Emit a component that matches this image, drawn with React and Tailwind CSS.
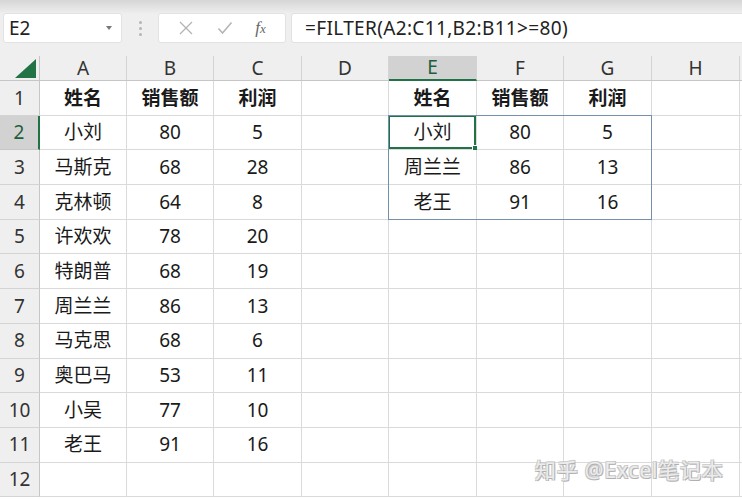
import React from 'react';

const COLS = ['A', 'B', 'C', 'D', 'E', 'F', 'G', 'H'];
const WIDTHS = [87, 87, 88, 87, 88, 87, 88, 88];

const LEFT = [
  ['姓名', '销售额', '利润'],
  ['小刘', 80, 5],
  ['马斯克', 68, 28],
  ['克林顿', 64, 8],
  ['许欢欢', 78, 20],
  ['特朗普', 68, 19],
  ['周兰兰', 86, 13],
  ['马克思', 68, 6],
  ['奥巴马', 53, 11],
  ['小吴', 77, 10],
  ['老王', 91, 16],
];

const RIGHT = [
  ['姓名', '销售额', '利润'],
  ['小刘', 80, 5],
  ['周兰兰', 86, 13],
  ['老王', 91, 16],
];

const font = { fontFamily: '"Noto Sans", "Noto Sans CJK SC", sans-serif' };

function cellValue(row, col) {
  if (col <= 2 && LEFT[row - 1]) return LEFT[row - 1][col];
  if (col >= 4 && col <= 6 && RIGHT[row - 1]) return RIGHT[row - 1][col - 4];
  return '';
}

function FormulaBar() {
  return (
    <div className="h-[56px] bg-gradient-to-b from-[#d6d6d6] via-[#efefef] via-[25%] to-[#efefef] flex items-start pt-[13px] pl-[3px]">
      <div className="w-[119px] h-[30px] bg-white rounded-[3px] border border-[#e2e2e2] flex items-center pl-[5px] pr-[9px]">
        <span className="text-[19px] text-[#222] flex-1">E2</span>
        <span className="w-0 h-0 border-l-[3px] border-r-[3px] border-t-[4px] border-l-transparent border-r-transparent border-t-[#777]" />
      </div>
      <div className="w-[36px] h-[30px] flex flex-col items-center justify-center gap-[3px]">
        <span className="w-[3px] h-[3px] rounded-full bg-[#b5b5b5]" />
        <span className="w-[3px] h-[3px] rounded-full bg-[#b5b5b5]" />
        <span className="w-[3px] h-[3px] rounded-full bg-[#b5b5b5]" />
      </div>
      <div className="w-[128px] h-[30px] bg-white rounded-[3px] border border-[#e2e2e2] flex items-center justify-around px-[8px]">
        <svg width="16" height="16" viewBox="0 0 16 16" stroke="#b4b4b4" strokeWidth="1.3" fill="none">
          <path d="M2 2 L14 14 M14 2 L2 14" />
        </svg>
        <svg width="16" height="14" viewBox="0 0 16 14" stroke="#b4b4b4" strokeWidth="1.5" fill="none">
          <path d="M1.5 7.5 L5.5 12 L14.5 1.5" />
        </svg>
        <span className="text-[17px] italic text-[#666]" style={{ fontFamily: '"Liberation Serif", serif' }}>
          f<span className="text-[13px]">x</span>
        </span>
      </div>
      <div className="flex-1 ml-[5px] h-[30px] bg-white rounded-l-[3px] border border-r-0 border-[#e2e2e2] flex items-center pl-[13px]">
        <span className="text-[19px] text-[#222] tracking-[0.35px]">=FILTER(A2:C11,B2:B11&gt;=80)</span>
      </div>
    </div>
  );
}

function HeaderRow() {
  return (
    <div className="flex h-[25px] bg-[#efefef] border-b border-[#c6c6c6]">
      <div className="w-[40px] shrink-0 border-r border-[#c6c6c6] flex items-end justify-end pr-[3px] pb-[2px]">
        <span className="w-0 h-0 border-l-[21px] border-b-[19px] border-l-transparent border-b-[#217346]" />
      </div>
      {COLS.map((c, i) => {
        const sel = c === 'E';
        return (
          <div
            key={c}
            style={{ width: WIDTHS[i] }}
            className={`shrink-0 border-r border-[#d4d4d4] flex items-center justify-center text-[19px] ${
              sel ? 'bg-[#d2d2d2] text-[#1d5f39] border-b-2 border-b-[#217346] -mb-[1px]' : 'text-[#333]'
            }`}
          >
            {c}
          </div>
        );
      })}
      <div className="flex-1" />
    </div>
  );
}

function Row({ r }) {
  const selRow = r === 2;
  return (
    <div className="flex h-[34.7px]">
      <div
        className={`w-[40px] shrink-0 border-b flex items-center justify-center text-[19px] ${
          selRow
            ? 'bg-[#d2d2d2] border-b-[#c6c6c6] border-r-2 border-r-[#217346] text-[#1d5f39]'
            : 'bg-[#efefef] border-b-[#d4d4d4] border-r border-r-[#c6c6c6] text-[#333]'
        }`}
      >
        {r}
      </div>
      {COLS.map((c, i) => {
        const v = cellValue(r, i);
        const isSel = r === 2 && c === 'E';
        return (
          <div
            key={c}
            style={{ width: WIDTHS[i] }}
            className={`relative shrink-0 border-r border-b border-[#dadada] flex items-center justify-center text-[19px] text-[#1a1a1a] ${
              r === 1 ? 'font-bold' : ''
            }`}
          >
            {v}
            {isSel && (
              <div className="absolute -left-[1px] -top-[1px] right-0 bottom-0 border-2 border-[#217346]">
                <span className="absolute -right-[4px] -bottom-[4px] w-[6px] h-[6px] bg-[#217346] border border-white" />
              </div>
            )}
          </div>
        );
      })}
      <div className="flex-1 border-b border-[#dadada]" />
    </div>
  );
}

export default function App() {
  const rows = Array.from({ length: 12 }, (_, i) => i + 1);
  return (
    <div className="w-[742px] h-[500px] overflow-hidden bg-white relative" style={font}>
      <FormulaBar />
      <div className="relative">
        <HeaderRow />
        {rows.map((r) => (
          <Row key={r} r={r} />
        ))}
        {/* spill range outline E2:G4 */}
        <div className="absolute left-[388px] top-[59px] w-[264px] h-[105px] border border-[#7390ad] pointer-events-none" />
      </div>
      <div
        className="absolute left-[535px] top-[455px] text-[21px] text-[#ececec] tracking-[0.8px]"
        style={{
          fontFamily: '"Noto Sans", "Noto Sans CJK SC", sans-serif',
          textShadow: '1px 1px 0 #b0b0b0, -1px -1px 0 #d0d0d0, 1px -1px 0 #c4c4c4, -1px 1px 0 #c4c4c4',
        }}
      >
        知乎 @Excel笔记本
      </div>
    </div>
  );
}
